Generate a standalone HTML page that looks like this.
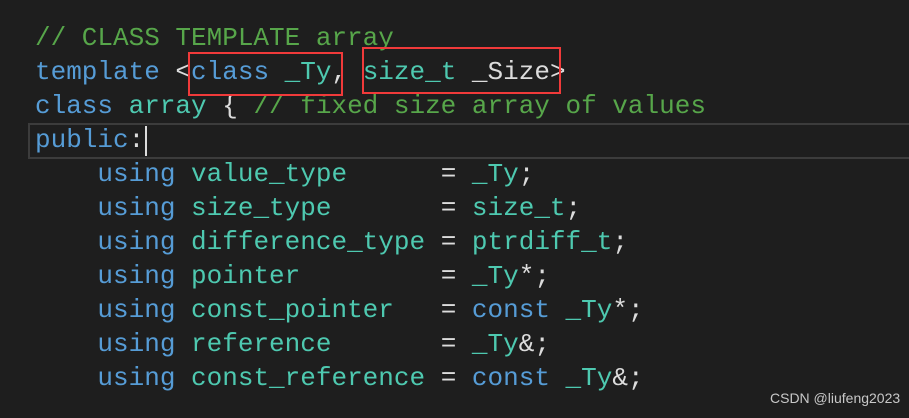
<!DOCTYPE html>
<html><head><meta charset="utf-8"><style>
html,body{margin:0;padding:0;}
body{width:909px;height:418px;background:#1e1e1e;position:relative;overflow:hidden;}
.code{position:absolute;left:35px;top:21px;font-family:"Liberation Mono",monospace;font-size:26px;line-height:34px;white-space:pre;color:#dcdcdc;}
.c{color:#57a64a}.k{color:#569cd6}.t{color:#4ec9b0}
.cur{position:absolute;left:28px;top:123px;width:890px;height:32px;border:2px solid #3c3c3c;}
.caret{position:absolute;left:145px;top:126px;width:2px;height:30px;background:#dcdcdc;}
.box{position:absolute;border:2px solid #f03a3a;}
.wm{position:absolute;left:770px;top:390px;font-family:"Liberation Sans",sans-serif;font-size:14px;color:#c8c8c8;}
</style></head><body>
<div class="cur"></div>
<div class="code"><span class="c">// CLASS TEMPLATE array</span>
<span class="k">template</span> &lt;<span class="k">class</span> <span class="t">_Ty</span>, <span class="t">size_t</span> _Size&gt;
<span class="k">class</span> <span class="t">array</span> { <span class="c">// fixed size array of values</span>
<span class="k">public</span>:
    <span class="k">using</span> <span class="t">value_type</span>      = <span class="t">_Ty</span>;
    <span class="k">using</span> <span class="t">size_type</span>       = <span class="t">size_t</span>;
    <span class="k">using</span> <span class="t">difference_type</span> = <span class="t">ptrdiff_t</span>;
    <span class="k">using</span> <span class="t">pointer</span>         = <span class="t">_Ty</span>*;
    <span class="k">using</span> <span class="t">const_pointer</span>   = <span class="k">const</span> <span class="t">_Ty</span>*;
    <span class="k">using</span> <span class="t">reference</span>       = <span class="t">_Ty</span>&amp;;
    <span class="k">using</span> <span class="t">const_reference</span> = <span class="k">const</span> <span class="t">_Ty</span>&amp;;</div>
<div class="caret"></div>
<div class="box" style="left:188px;top:52px;width:151px;height:40px;"></div>
<div class="box" style="left:362px;top:47px;width:195px;height:43px;"></div>
<div class="wm">CSDN @liufeng2023</div>
</body></html>
